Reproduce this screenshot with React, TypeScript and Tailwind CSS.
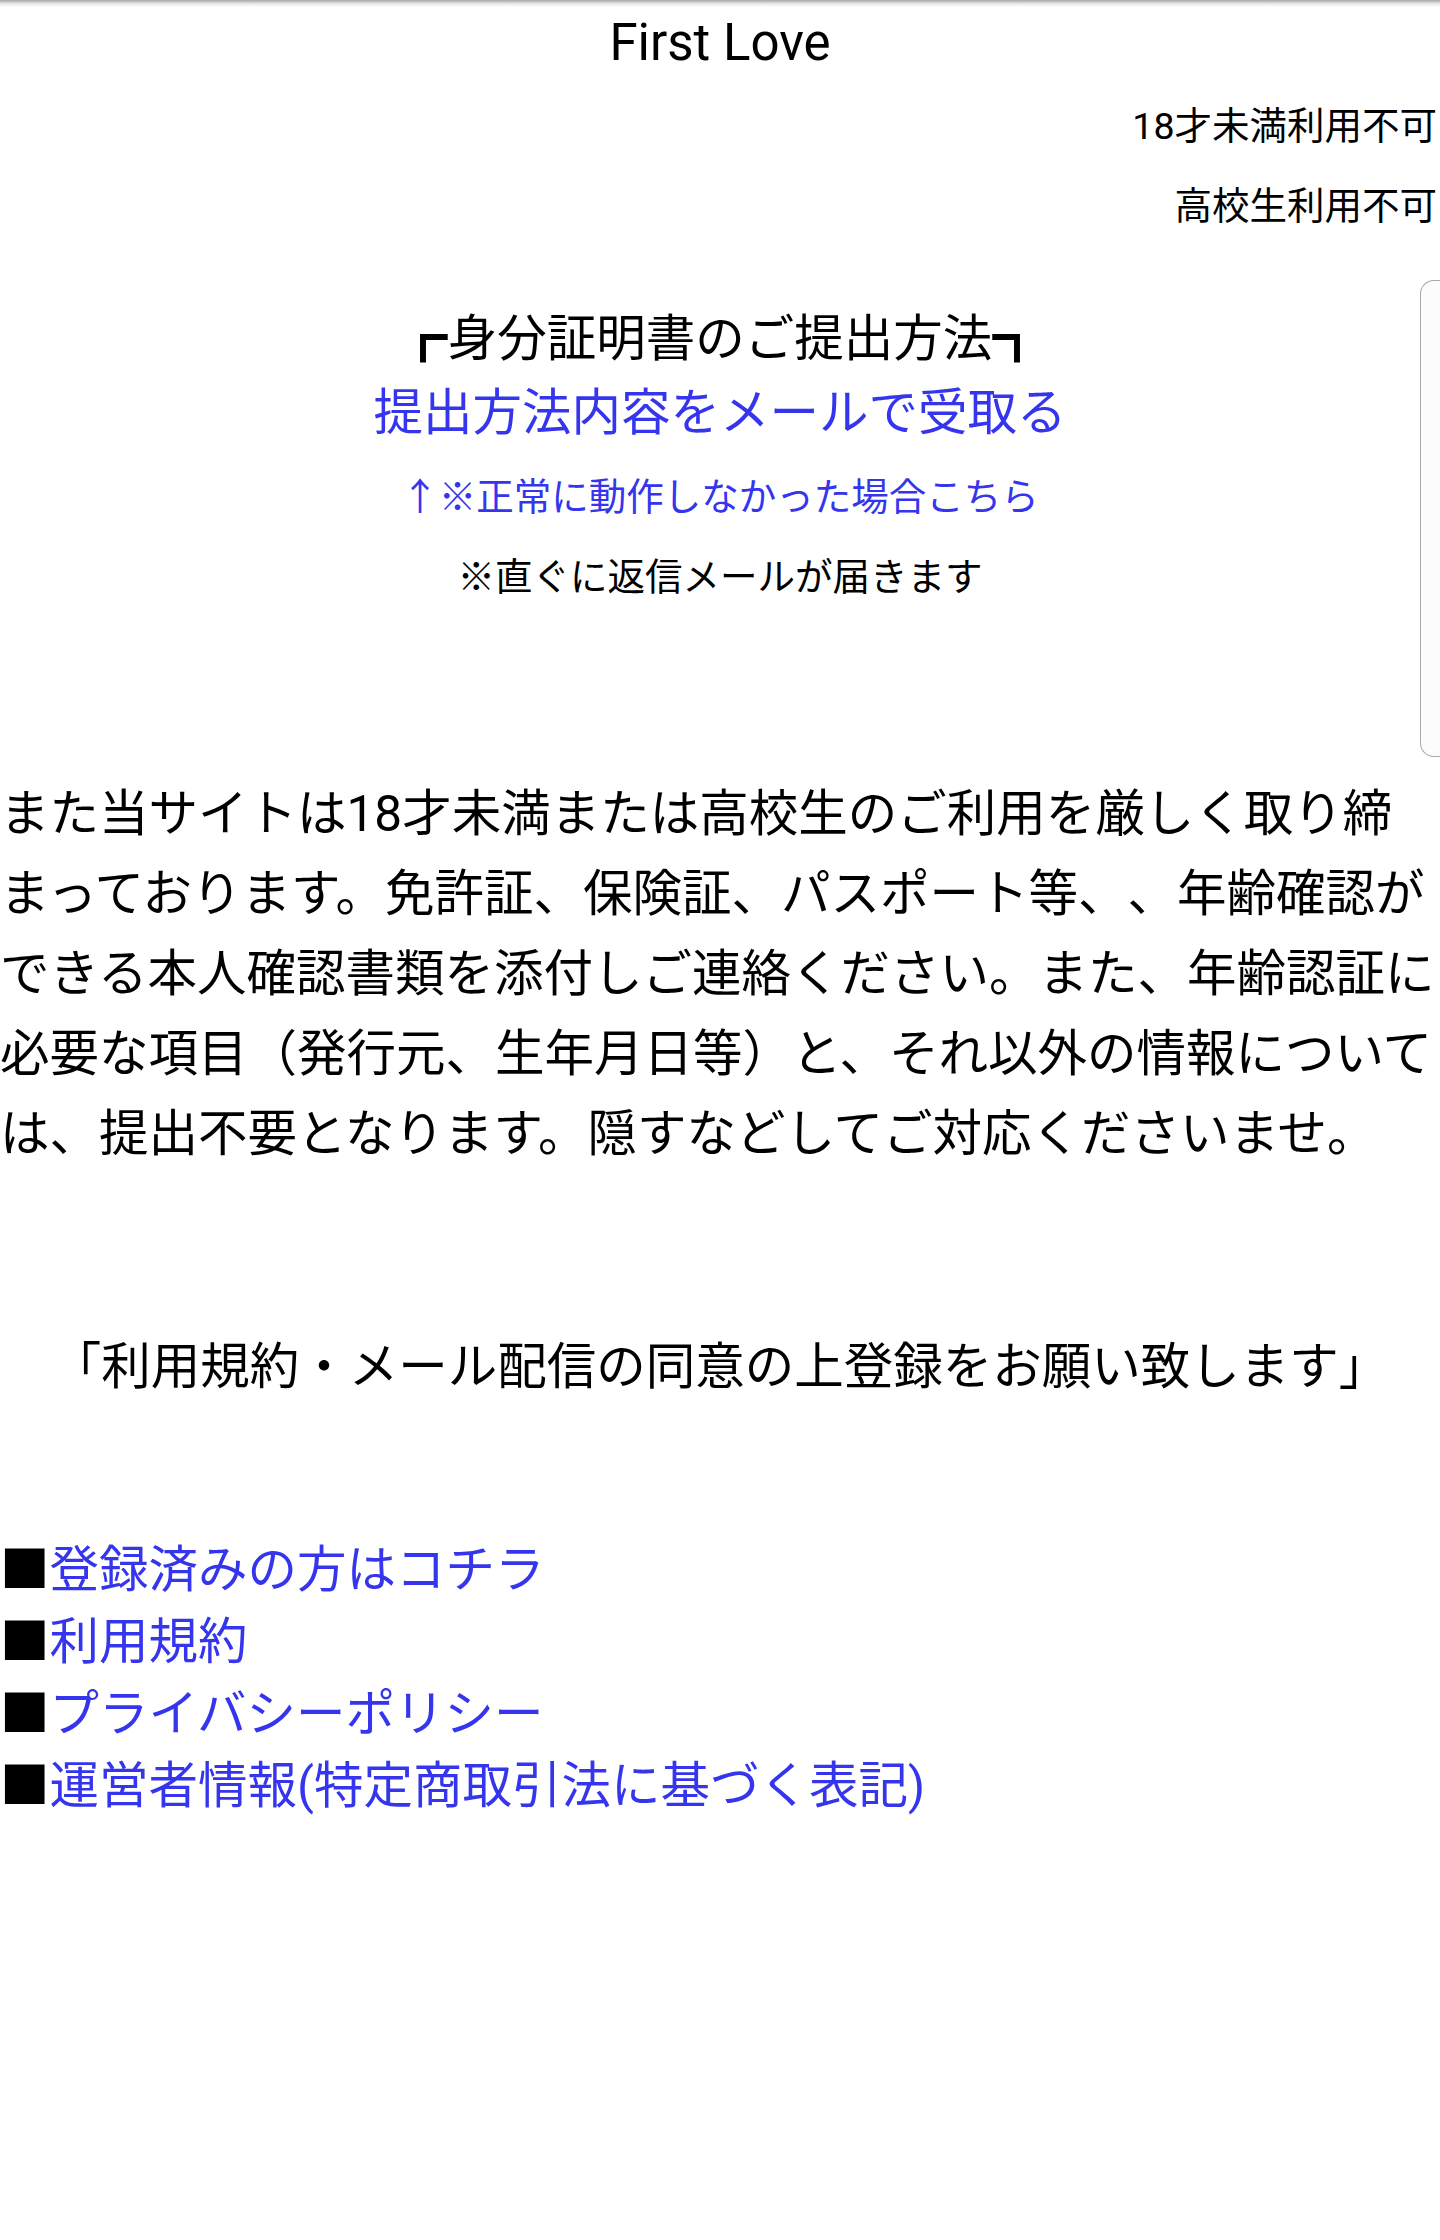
const blue = 'text-[#3535ee]';

const paragraph = [
  'また当サイトは18才未満または高校生のご利用を厳しく取り締',
  'まっております。免許証、保険証、パスポート等、、年齢確認が',
  'できる本人確認書類を添付しご連絡ください。また、年齢認証に',
  '必要な項目（発行元、生年月日等）と、それ以外の情報について',
  'は、提出不要となります。隠すなどしてご対応くださいませ。',
];

const links = [
  '登録済みの方はコチラ',
  '利用規約',
  'プライバシーポリシー',
  '運営者情報(特定商取引法に基づく表記)',
];

export default function App() {
  return (
    <div className="relative min-h-[2240px] w-full overflow-hidden bg-white text-black [text-spacing-trim:space-all] font-[family-name:Roboto,'Noto_Sans_CJK_JP',sans-serif]">
      {/* top shadow from the browser bar */}
      <div className="absolute left-0 right-0 top-0 h-[7px] bg-gradient-to-b from-[#a8a8a8] via-[#e4e4e4] to-white" />

      {/* side tab peeking in from the right edge */}
      <div className="absolute right-0 top-[280px] h-[477px] w-[20px] rounded-l-[14px] border border-r-0 border-[#a9a9a9] bg-[#fcfcfc]" />

      <h1 className="h-[86px] text-center text-[51px] font-normal leading-[86px]">First Love</h1>

      <div className="pr-[3px] text-right text-[37.5px] leading-[80px]">
        <div>18才未満利用不可</div>
        <div>高校生利用不可</div>
      </div>

      <div className="mt-[55px] text-center">
        <div className="text-[49.5px] leading-[76px]">┏身分証明書のご提出方法┓</div>
        <a className={`block text-[49.5px] leading-[72px] ${blue}`}>提出方法内容をメールで受取る</a>
        <a className={`block text-[37.5px] leading-[96px] ${blue}`}>↑※正常に動作しなかった場合こちら</a>
        <div className="text-[37.5px] leading-[64px]">※直ぐに返信メールが届きます</div>
      </div>

      <div className="mt-[165px] text-[49.5px] leading-[80px]">
        {paragraph.map((line) => (
          <div key={line} className="whitespace-nowrap">{line}</div>
        ))}
      </div>

      <p className="mt-[153px] whitespace-nowrap text-center text-[49.5px] leading-[80px]">
        「利用規約・メール配信の同意の上登録をお願い致します」
      </p>

      <ul className="mt-[127px] text-[49.5px] leading-[72px]">
        {links.map((label) => (
          <li key={label} className="whitespace-nowrap">
            ■<a className={blue}>{label}</a>
          </li>
        ))}
      </ul>
    </div>
  );
}
